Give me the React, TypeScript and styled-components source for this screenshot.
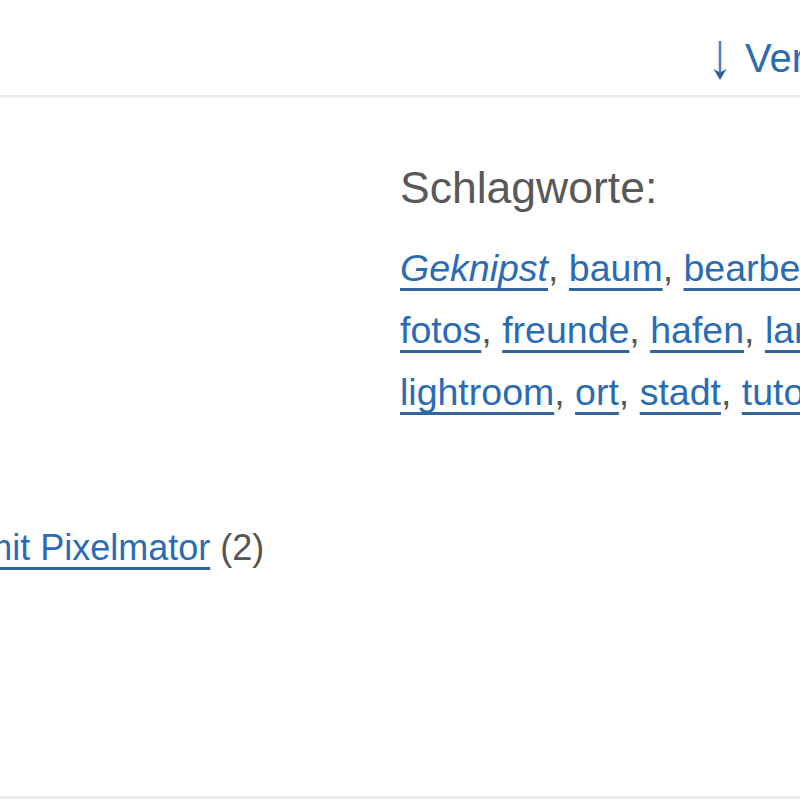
import React from "react";
import styled, { createGlobalStyle } from "styled-components";

const GlobalStyle = createGlobalStyle`
  html, body {
    margin: 0;
    padding: 0;
    background: #ffffff;
    overflow: hidden;
  }
  body {
    font-family: "Liberation Sans", Arial, Helvetica, sans-serif;
    color: #555555;
  }
`;

const Page = styled.div`
  width: 800px;
  height: 800px;
  overflow: hidden;
  display: flex;
  flex-direction: column;
`;

const Header = styled.header`
  height: 95px;
  flex: none;
  border-bottom: 3px solid #ececec;
  display: flex;
  justify-content: flex-start;
  align-items: flex-start;
  padding-left: 711px;
  box-sizing: content-box;
`;

const DownloadLink = styled.a`
  display: flex;
  align-items: center;
  gap: 16px;
  margin-top: 35px;
  white-space: nowrap;
  font-size: 40px;
  line-height: 45px;
  color: #2a6bb5;
  text-decoration: none;
`;

const ArrowIcon = styled.svg`
  flex: none;
  width: 18px;
  height: 40px;
  margin-top: 6px;
`;

const Main = styled.main`
  flex: 1;
  display: grid;
  grid-template-columns: 400px 600px;
  border-bottom: 3px solid #ececec;
  margin-bottom: 1px;
`;

const LeftColumn = styled.section`
  padding-top: 419px;
  margin-left: -278px;
  white-space: nowrap;
`;

const RightColumn = styled.section`
  padding-top: 64px;
  white-space: nowrap;
`;

const Heading = styled.h3`
  margin: 0 0 24px 0;
  font-weight: normal;
  font-size: 44.5px;
  line-height: 51px;
  color: #595959;
`;

const TagLine = styled.div`
  font-size: 37.5px;
  line-height: 62px;
  color: #555555;
`;

const Line = styled.div`
  font-size: 36px;
  line-height: 62px;
  color: #555555;
`;

const Link = styled.a<{ $italic?: boolean }>`
  color: #2a6bb5;
  font-style: ${(p) => (p.$italic ? "italic" : "normal")};
  text-decoration: underline;
  text-decoration-color: #33649c;
  text-decoration-thickness: 3px;
  text-underline-offset: 7px;
  text-decoration-skip-ink: none;
`;

const Count = styled.span`
  color: #555555;
`;

const tagLines: { name: string; italic?: boolean }[][] = [
  [{ name: "Geknipst", italic: true }, { name: "baum" }, { name: "bearbeitung" }],
  [{ name: "fotos" }, { name: "freunde" }, { name: "hafen" }, { name: "landschaft" }],
  [{ name: "lightroom" }, { name: "ort" }, { name: "stadt" }, { name: "tutorial" }],
];

export default function App() {
  return (
    <>
      <GlobalStyle />
      <Page>
        <Header>
          <DownloadLink href="#">
            <ArrowIcon viewBox="0 0 18 40">
              <line x1="9" y1="0" x2="9" y2="33" stroke="#4d7fc0" strokeWidth="2.5" />
              <path d="M2.5 28 L9 39 L15.5 28 L9 31.5 Z" fill="#2f5f98" />
            </ArrowIcon>
            Verwandte Artikel
          </DownloadLink>
        </Header>
        <Main>
          <LeftColumn>
            <Line>
              <Link href="#">Bildbearbeitung mit Pixelmator</Link> <Count>(2)</Count>
            </Line>
          </LeftColumn>
          <RightColumn>
            <Heading>Schlagworte:</Heading>
            {tagLines.map((line, i) => (
              <TagLine key={i}>
                {line.map((t, j) => (
                  <React.Fragment key={t.name}>
                    <Link href="#" $italic={t.italic}>
                      {t.name}
                    </Link>
                    {j < line.length - 1 || i < tagLines.length - 1 ? ", " : ""}
                  </React.Fragment>
                ))}
              </TagLine>
            ))}
          </RightColumn>
        </Main>
      </Page>
    </>
  );
}
